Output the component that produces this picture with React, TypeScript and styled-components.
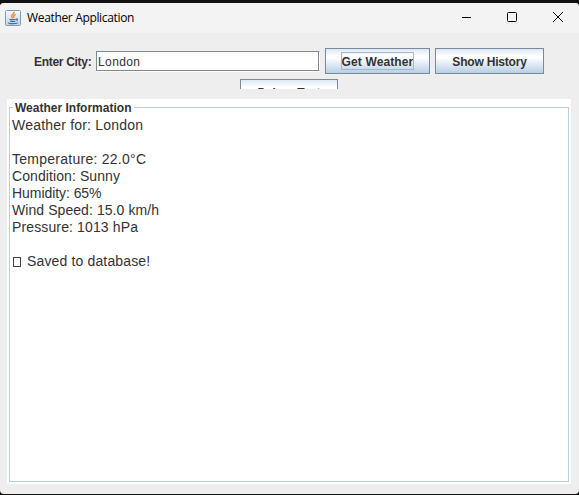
import React from "react";
import styled, { createGlobalStyle } from "styled-components";

const Global = createGlobalStyle`
  * { box-sizing: border-box; }
  body { margin: 0; background: #141414; overflow: hidden; }
`;

const Screen = styled.div`
  width: 579px;
  height: 495px;
  padding: 3px 0 1px;
  background: #111;
  font-family: "Liberation Sans", Arial, sans-serif;
  color: #333;
`;

const Window = styled.div`
  height: 491px;
  display: flex;
  flex-direction: column;
  background: #eee;
  border-radius: 4px;
  overflow: hidden;
`;

const TitleBar = styled.header`
  height: 30px;
  flex: none;
  display: flex;
  align-items: center;
  padding-left: 5px;
  background: #f3f3f3;
`;

const Title = styled.span`
  flex: 1;
  margin-left: 6px;
  font: 12px/16px "Open Sans", "Noto Sans", sans-serif;
  letter-spacing: -0.34px;
  color: #000;
`;

const WindowControls = styled.div`
  display: flex;
  align-items: center;
  flex: none;
  padding: 0 16px 2px 0;
  gap: 36px;
`;

const Toolbar = styled.div`
  height: 56px;
  flex: none;
  margin: 0 7px 10px;
  padding-top: 15px;
  overflow: hidden;
`;

const Row = styled.div<{ $indent: number }>`
  display: flex;
  align-items: center;
  gap: 5px;
  height: 26px;
  margin-bottom: 5px;
  padding-left: ${(p) => p.$indent}px;
`;

const Label = styled.label`
  width: 57px;
  padding-top: 1px;
  font-size: 12px;
  font-weight: bold;
  line-height: 16px;
  letter-spacing: -0.3px;
  white-space: nowrap;
`;

const CityInput = styled.input`
  width: 224px;
  height: 20px;
  margin-top: -1px;
  padding: 2px 1px 0;
  border: 1px solid #7a8a99;
  border-right-color: #fff;
  box-shadow: inset -1px 0 #7a8a99, 0 1px #fff;
  border-radius: 0;
  outline: none;
  background: #fff;
  color: #333;
  font: 12px/16px "Liberation Sans", Arial, sans-serif;
  letter-spacing: 0.4px;
`;

const Button = styled.button<{ $width: number }>`
  width: ${(p) => p.$width}px;
  height: 26px;
  flex: none;
  display: flex;
  align-items: center;
  justify-content: center;
  padding: 0;
  border: 1px solid #7a8a99;
  border-radius: 0;
  background: linear-gradient(#dde8f3 0, #fff 30%, #fff 36%, #b8cfe5 100%);
  color: #333;
  font: bold 12px/16px "Liberation Sans", Arial, sans-serif;
  white-space: nowrap;
`;

const ButtonText = styled.span<{ $focused?: boolean; $tracking: number }>`
  height: 18px;
  padding: 2px ${(p) => (p.$focused ? "0.5px" : "0")} 0;
  letter-spacing: ${(p) => p.$tracking}px;
  outline: ${(p) => (p.$focused ? "1px solid #a3b8cc" : "none")};
  outline-offset: -1px;
`;

const Panel = styled.section`
  width: 564px;
  height: 385px;
  flex: none;
  margin-left: 7px;
  padding: 2px;
  background: #fff;
`;

const InfoGroup = styled.fieldset`
  height: 381px;
  min-width: 0;
  margin: 0;
  padding: 0 2px;
  border: 1px solid #b8cfe5;
`;

const Legend = styled.legend`
  height: 13px;
  margin-left: 1px;
  padding: 0 3px 0 2px;
  font-size: 12px;
  font-weight: bold;
  line-height: 15px;
`;

const Report = styled.div`
  margin-top: 3px;
  font-size: 14px;
  line-height: 17px;
`;

const Line = styled.div<{ $tracking?: number }>`
  height: 17px;
  display: flex;
  align-items: center;
  letter-spacing: ${(p) => p.$tracking ?? 0}px;
  white-space: pre;
`;

const MissingGlyph = styled.span`
  width: 8px;
  height: 10px;
  margin: 0 6px 0 1px;
  border: 1px solid #444;
`;

function JavaIcon() {
  return (
    <svg width="16" height="16" viewBox="0 0 16 16" fill="none">
      <defs>
        <linearGradient id="tile" x2="0" y2="1">
          <stop stopColor="#f8fafc" />
          <stop offset="1" stopColor="#c3d3e2" />
        </linearGradient>
      </defs>
      <rect x=".5" y=".5" width="15" height="15" rx="1" fill="url(#tile)" stroke="#7f9bb4" />
      <path d="M9.2 1.8C9.4 4 6.2 4.4 6.6 6.4L8 8.4M10.8 4.4C8.4 5.4 8.4 6.2 9.2 7.6" stroke="#ec8a35" strokeWidth="1.4" />
      <path d="M4.4 9.2Q7.6 10.2 10.8 9.2M5.2 11.2Q8 12 10.4 11.2M11 8.9Q13.8 8.7 11.4 10.9M3.4 12.5Q3.4 13.8 8 13.7T12.6 12.6" stroke="#41749c" strokeWidth="1.2" />
    </svg>
  );
}

const lines = [
  { text: "Weather for: London", tracking: 0.2 },
  { text: "" },
  { text: "Temperature: 22.0°C", tracking: 0.26 },
  { text: "Condition: Sunny", tracking: 0.09 },
  { text: "Humidity: 65%", tracking: -0.06 },
  { text: "Wind Speed: 15.0 km/h", tracking: 0.07 },
  { text: "Pressure: 1013 hPa", tracking: 0.13 },
  { text: "" },
];

export default function App() {
  return (
    <Screen>
      <Global />
      <Window>
        <TitleBar>
          <JavaIcon />
          <Title>Weather Application</Title>
          <WindowControls>
            <svg width="10" height="10"><path d="M1 5.5h9" stroke="#000" /></svg>
            <svg width="10" height="10" fill="none"><rect x=".5" y=".5" width="9" height="9" rx="1" stroke="#000" /></svg>
            <svg width="10" height="10"><path d="M0 0l10 10M10 0L0 10" stroke="#000" /></svg>
          </WindowControls>
        </TitleBar>
        <Toolbar>
          <Row $indent={27}>
            <Label htmlFor="city">Enter City:</Label>
            <CityInput id="city" defaultValue="London" />
            <Button $width={105}><ButtonText $focused $tracking={0.12}>Get Weather</ButtonText></Button>
            <Button $width={109}><ButtonText $tracking={-0.2}>Show History</ButtonText></Button>
          </Row>
          <Row $indent={233}>
            <Button $width={98}><ButtonText $tracking={-0.15}>Debug Test</ButtonText></Button>
          </Row>
        </Toolbar>
        <Panel>
          <InfoGroup>
            <Legend>Weather Information</Legend>
            <Report>
              {lines.map((line, i) => <Line key={i} $tracking={line.tracking}>{line.text}</Line>)}
              <Line $tracking={0.15}><MissingGlyph />Saved to database!</Line>
            </Report>
          </InfoGroup>
        </Panel>
      </Window>
    </Screen>
  );
}
